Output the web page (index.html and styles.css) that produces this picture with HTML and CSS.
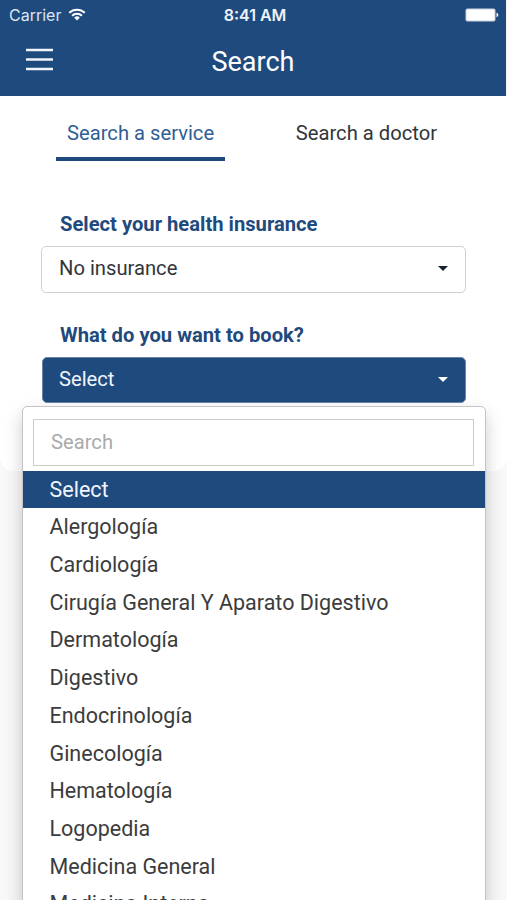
FILE: index.html
```html
<!DOCTYPE html>
<html lang="en">
<head>
<meta charset="utf-8">
<title>Search</title>
<link rel="stylesheet" href="styles.css">
</head>
<body>
<div class="screen">
  <header class="header">
    <div class="status">
      <div class="carrier"><span>Carrier</span>
        <svg class="wifi" width="18" height="13" viewBox="0 0 18 13"><g fill="none" stroke="#fff" stroke-width="2"><path d="M1.2 4.8a11.2 11.2 0 0 1 15.6 0"/><path d="M4.1 7.8a7 7 0 0 1 9.8 0"/></g><path d="M9 12.5 6.2 9.7a4 4 0 0 1 5.6 0Z" fill="#fff"/></svg>
      </div>
      <span class="clock">8:41 AM</span>
      <svg class="battery" width="34" height="14" viewBox="0 0 34 14"><rect x=".5" y=".5" width="30" height="13" rx="2" fill="#fff" fill-opacity=".75"/><rect x="1.5" y="1.5" width="28" height="11" rx="1" fill="#fff"/><path d="M31.5 4.8c2.4.7 2.4 3.7 0 4.4Z" fill="#fff"/></svg>
    </div>
    <div class="navbar">
      <svg class="menu" width="27" height="23" viewBox="0 0 27 23"><path d="M0 2h27M0 11.5h27M0 21h27" stroke="#f1f5fb" stroke-width="2.3"/></svg>
      <h1 class="title">Search</h1>
    </div>
  </header>
  <main class="card">
    <nav class="tabs">
      <a class="tab tab-active">Search a service</a>
      <a class="tab">Search a doctor</a>
    </nav>
    <label class="label">Select your health insurance</label>
    <div class="select"><span>No insurance</span><i class="caret"></i></div>
    <label class="label label-second">What do you want to book?</label>
    <div class="select select-open"><span>Select</span><i class="caret"></i>
      <div class="dropdown">
        <div class="search">Search</div>
        <ul class="options">
          <li class="selected">Select</li>
          <li>Alergología</li>
          <li>Cardiología</li>
          <li>Cirugía General Y Aparato Digestivo</li>
          <li>Dermatología</li>
          <li>Digestivo</li>
          <li>Endocrinología</li>
          <li>Ginecología</li>
          <li>Hematología</li>
          <li>Logopedia</li>
          <li>Medicina General</li>
          <li>Medicina Interna</li>
        </ul>
      </div>
    </div>
  </main>
</div>
</body>
</html>
```
FILE: styles.css
```css
* { box-sizing: border-box; }
body { margin: 0; font: 20.2px/24px Roboto, sans-serif; color: #32363a; }
.screen { height: 900px; overflow: hidden; background: #f8f8f8; }
.header { height: 95.5px; margin-right: 1px; background: #1f4a7d; color: #fff; }
.status {
  display: grid; grid-template-columns: 1fr auto 1fr; align-items: center;
  height: 30px; padding: 0 7px 0 9px;
  font: 16px/30px Inter, sans-serif;
}
.carrier { display: flex; align-items: center; gap: 7px; color: #dbe6f3; }
.wifi { margin-top: -2px; }
.clock { padding-left: 2px; font-weight: 600; color: #edf3fa; font-size: 16px; }
.status > * { height: 30px; }
.status .battery { height: 14px; }
.carrier span, .clock { margin-top: -1px; }
.battery { justify-self: end; }
.navbar {
  display: grid; grid-template-columns: 80px 1fr 80px; align-items: center;
  height: 65px;
}
.menu { margin: -6px 0 0 26px; }
.title { margin: 0; font-size: 27px; line-height: 65px; font-weight: 400; text-align: center; }
.card {
  height: 375.5px; padding: 21.5px 41px 0 41px;
  background: #fff; border-radius: 0 0 14px 14px;
}
.tabs { display: flex; justify-content: space-between; padding: 0 18px 0 15px; }
.tab { height: 43.5px; padding: 4px 11px 0; }
.tab-active { color: #315e94; border-bottom: 4px solid #1f4a7d; }
.label { display: block; margin: 51px 18px 10px 19px; font-weight: 700; color: #1f4a7d; }
.label-second { margin-top: 30px; }
.select {
  position: relative; display: flex; justify-content: space-between; align-items: center;
  height: 47px; padding: 0 17px 1px 17px;
  border: 1.5px solid #d0d0d0; border-radius: 5px;
}
.select > span { padding-bottom: 1px; }
.caret { width: 0; height: 0; border: 5.5px solid transparent; border-top-color: #17232f; border-bottom: 0; }
.select-open { height: 46px; margin-left: 1px; padding-left: 16px; background: #1f4a7d; border: 1px solid #6685a8; color: #eff5fc; }
.select-open .caret { border-top-color: #fff; }
.dropdown {
  position: absolute; top: 48px; left: -21px; width: 464px; height: 600px;
  padding-top: 12px;
  border: 1px solid #c4c4c4; border-radius: 5px;
  background: #fff; color: #3c3c3c; box-shadow: 0 8px 18px rgba(0,0,0,.2);
}
.search {
  height: 47px; margin: 0 11px 5px 10px; padding: 0 17px;
  border: 1.5px solid #ccc; line-height: 45px; color: #aaa;
}
.options { margin: 0; padding: 0; list-style: none; font-size: 21.5px; line-height: 37.72px; }
.options li { height: 37.72px; padding-left: 26.5px; }
.options .selected { background: #1f4a7d; color: #eff5fc; }
```
